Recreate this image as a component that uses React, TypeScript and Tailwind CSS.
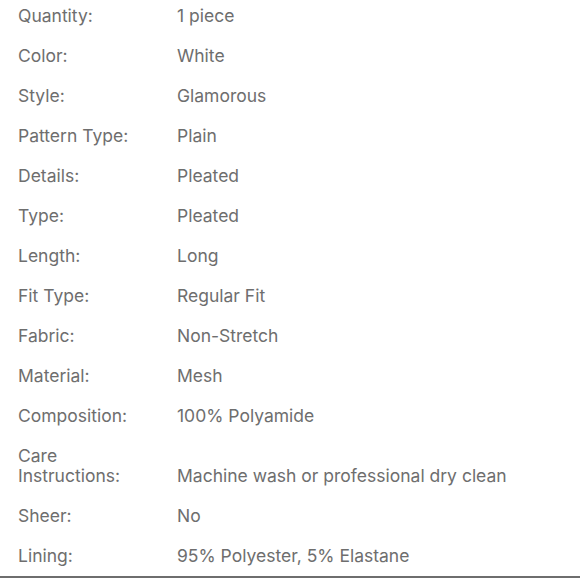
const specs: [string, string][] = [
  ["Quantity:", "1 piece"],
  ["Color:", "White"],
  ["Style:", "Glamorous"],
  ["Pattern Type:", "Plain"],
  ["Details:", "Pleated"],
  ["Type:", "Pleated"],
  ["Length:", "Long"],
  ["Fit Type:", "Regular Fit"],
  ["Fabric:", "Non-Stretch"],
  ["Material:", "Mesh"],
  ["Composition:", "100% Polyamide"],
  ["Care Instructions:", "Machine wash or professional dry clean"],
  ["Sheer:", "No"],
  ["Lining:", "95% Polyester, 5% Elastane"],
];

export default function App() {
  return (
    <div className="w-[580px] h-[580px] bg-white overflow-hidden font-['Inter',sans-serif] text-[17.5px] leading-[20px] text-[#6e6e6e]">
      <div className="h-[578px] border-b-2 border-[#6e6e6e] px-[18px]">
        {specs.map(([label, value]) => (
          <div key={label} className="flex items-end pt-[6px] pb-[14px]">
            <div className="w-[159px] shrink-0 pr-2">
              {label === "Care Instructions:" ? (
                <>
                  Care
                  <br />
                  Instructions:
                </>
              ) : (
                label
              )}
            </div>
            <div>{value}</div>
          </div>
        ))}
      </div>
    </div>
  );
}
